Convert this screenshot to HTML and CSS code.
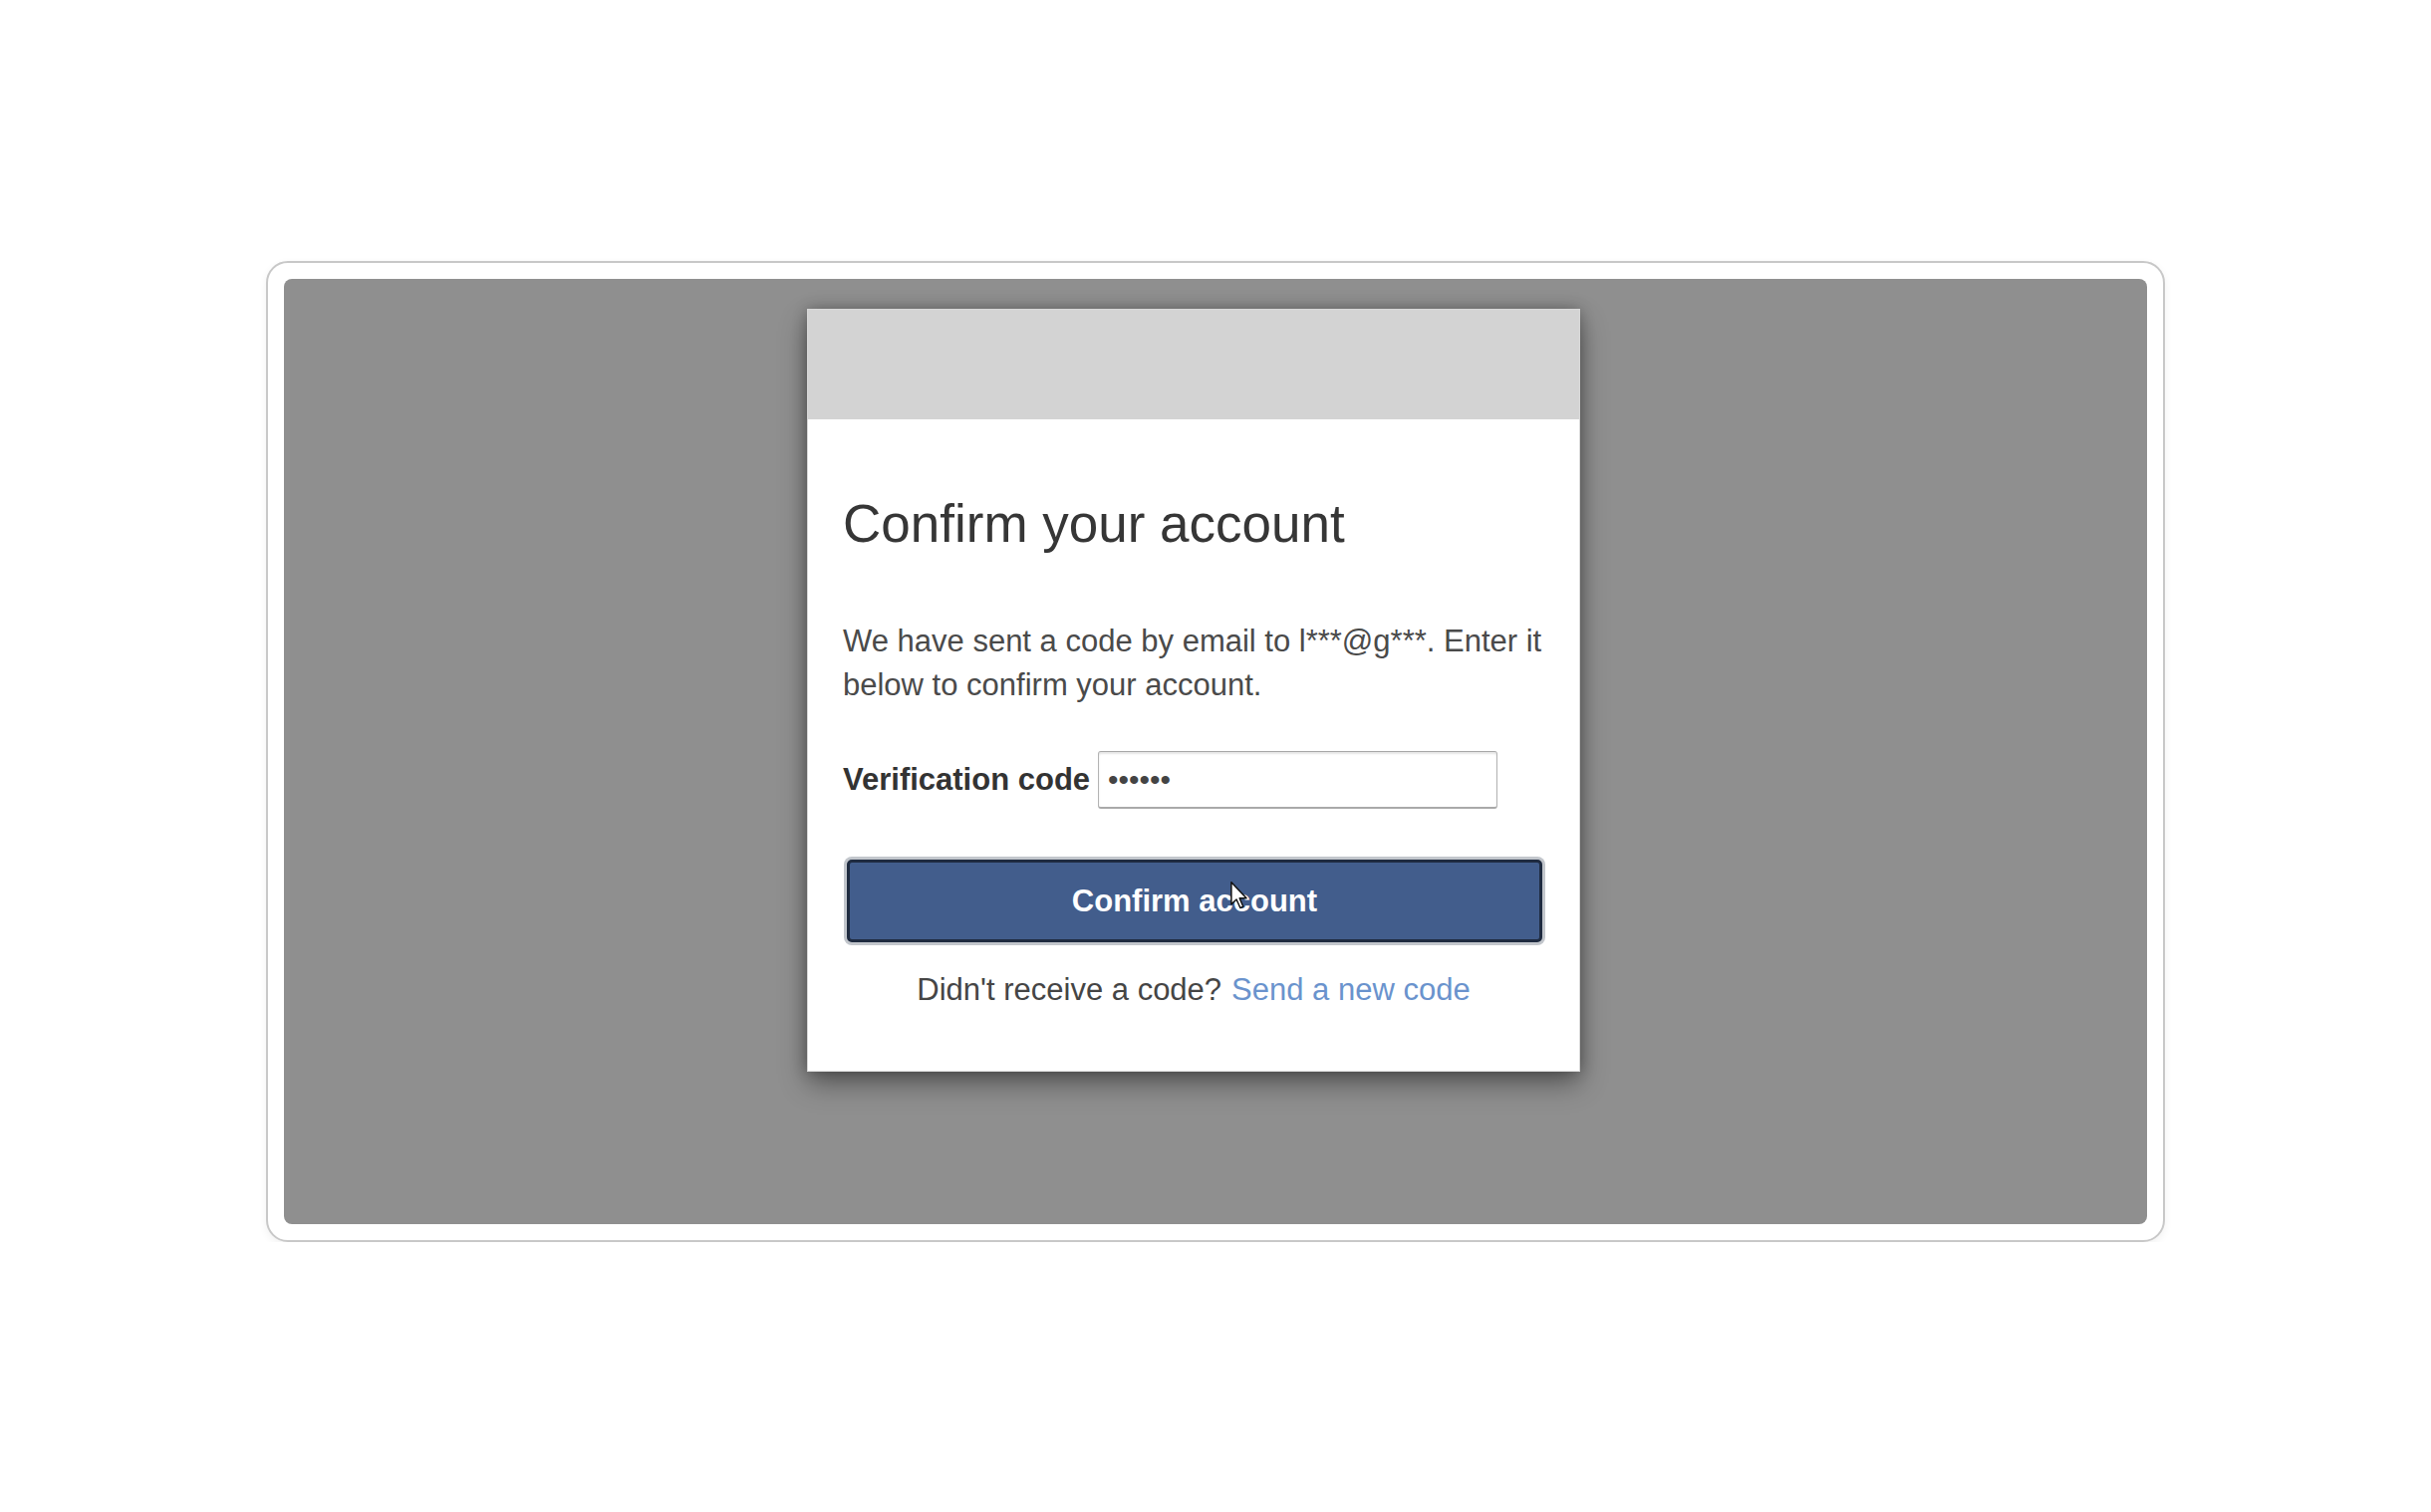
FILE: index.html
```html
<!DOCTYPE html>
<html lang="en">
<head>
<meta charset="utf-8">
<title>Confirm your account</title>
<link rel="stylesheet" href="styles.css">
</head>
<body>
<div class="frame">
  <div class="stage">
    <div class="card">
      <div class="card-header"></div>
      <div class="card-body">
        <h1 class="title">Confirm your account</h1>
        <p class="desc">We have sent a code by email to l***@g***. Enter it below to confirm your account.</p>
        <div class="field">
          <label class="field-label" for="code">Verification code</label>
          <input class="field-input" id="code" type="text" value="••••••" readonly>
        </div>
        <button class="confirm-btn" type="button">Confirm account
          <svg class="cursor" width="18" height="28" viewBox="0 0 12 19" aria-hidden="true"><path d="M0.5 0.5 L0.5 15.5 L4 12.2 L6.6 18 L8.6 17.1 L6.1 11.4 L10.8 11.4 Z" fill="#fff" stroke="#111" stroke-width="1" stroke-linejoin="round"/></svg>
        </button>
        <p class="resend">Didn't receive a code?<a class="resend-link" href="#">Send a new code</a></p>
      </div>
    </div>
  </div>
</div>
</body>
</html>
```
FILE: styles.css
```css
html, body {
  margin: 0;
  padding: 0;
  background: #ffffff;
}
body {
  padding-top: 262px;
  font-family: "Liberation Sans", Arial, sans-serif;
}
.frame {
  box-sizing: border-box;
  width: 1906px;
  height: 985px;
  margin: 0 auto;
  border: 2px solid #c8c8c8;
  border-radius: 22px;
  padding: 16px 16px;
  background: #ffffff;
  box-shadow: 0 3px 8px rgba(0, 0, 0, 0.06);
}
.stage {
  box-sizing: border-box;
  height: 100%;
  background: #8f8f8f;
  border-radius: 8px;
  padding: 31px 0 0 526px;
}
.card {
  width: 774px;
  background: #ffffff;
  box-shadow: 0 0 0 1px #d8d8d8, 0 12px 26px rgba(0, 0, 0, 0.42), 0 0 14px rgba(0, 0, 0, 0.3);
}
.card-header {
  height: 110px;
  background: #d3d3d3;
}
.card-body {
  padding: 0 35px 63px 35px;
}
.title {
  margin: 75px 0 0 0;
  font-size: 53px;
  line-height: 60px;
  font-weight: normal;
  color: #363636;
}
.desc {
  margin: 66px 0 0 0;
  font-size: 31px;
  line-height: 44px;
  color: #4a4a4a;
}
.field {
  display: flex;
  align-items: center;
  margin-top: 44px;
  height: 58px;
}
.field-label {
  font-size: 31px;
  font-weight: bold;
  color: #333333;
}
.field-input {
  box-sizing: border-box;
  width: 401px;
  height: 58px;
  margin-left: 8px;
  padding: 0 0 0 9px;
  border: 1px solid #b3b3b3;
  border-top-color: #a8a8a8;
  border-bottom: 2px solid #a9a9a9;
  border-radius: 3px;
  box-shadow: inset 0 2px 2px rgba(0, 0, 0, 0.1);
  font-family: "Liberation Sans", Arial, sans-serif;
  font-size: 30px;
  color: #444444;
  background: #ffffff;
  outline: none;
}
.confirm-btn {
  position: relative;
  display: block;
  box-sizing: border-box;
  width: 698px;
  height: 83px;
  margin: 51px 0 0 4px;
  padding: 0;
  border: 3px solid #1f2b40;
  border-radius: 5px;
  background: #425d8c;
  box-shadow: 0 0 0 3px #c2c6cc;
  font-family: "Liberation Sans", Arial, sans-serif;
  font-size: 31px;
  font-weight: bold;
  color: #ffffff;
  cursor: pointer;
}
.cursor {
  position: absolute;
  left: 382px;
  top: 19px;
}
.resend {
  margin: 30px 0 0 0;
  font-size: 31px;
  line-height: 36px;
  text-align: center;
  color: #454545;
}
.resend-link {
  margin-left: 10px;
  color: #6a93cd;
  text-decoration: none;
}
```
